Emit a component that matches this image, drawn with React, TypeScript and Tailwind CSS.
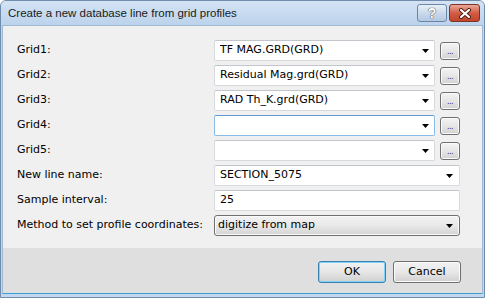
import React from 'react'

const Arrow = () => (
  <svg width="7" height="4" viewBox="0 0 7 4" className="shrink-0">
    <path d="M0 0H7L3.5 4Z" fill="#000" />
  </svg>
)

function Combo({ value, focused }: { value: string; focused?: boolean }) {
  return (
    <div
      className={
        'h-[21px] flex items-center justify-between pl-[5px] pr-[5px] bg-white rounded-[2px] border ' +
        (focused ? 'border-[#8bbce8] border-t-[#5d9ad6]' : 'border-[#d6d9de] border-t-[#c2c6cc]')
      }
    >
      <span className="truncate">{value}</span>
      <Arrow />
    </div>
  )
}

function Browse() {
  return (
    <div className="w-[20px] h-[18px] self-center flex items-end justify-center pb-[3px] rounded-[3px] border border-[#707070] bg-gradient-to-b from-[#f4f4f4] via-[#e6e6e6] to-[#d2d2d2] shadow-[inset_0_0_0_1px_#fbfbfb]">
      <span className="text-[8px] leading-[8px] tracking-[-0.5px] text-[#3a2a6a]">...</span>
    </div>
  )
}

const grids = [
  { label: 'Grid1:', value: 'TF MAG.GRD(GRD)' },
  { label: 'Grid2:', value: 'Residual Mag.grd(GRD)' },
  { label: 'Grid3:', value: 'RAD Th_K.grd(GRD)' },
  { label: 'Grid4:', value: '', focused: true },
  { label: 'Grid5:', value: '' },
]

export default function App() {
  return (
    <div className="w-[485px] h-[298px] flex flex-col bg-[#c2d7ee] border border-[#6f8cad] rounded-t-[6px] overflow-hidden font-['DejaVu_Sans',sans-serif] text-[11px] text-black">
      {/* title bar */}
      <div className="h-[24px] shrink-0 flex items-center justify-between pl-[7px] pr-[4px] bg-gradient-to-b from-[#d3e3f4] to-[#bcd3ec]">
        <span className="font-['Liberation_Sans',sans-serif] text-[11.5px] text-[#1b1b1b] mt-[1px]">
          Create a new database line from grid profiles
        </span>
        <div className="flex items-start gap-[2px] self-start mt-[3px]">
          <div className="w-[30px] h-[18px] flex items-center justify-center rounded-[3px] border border-[#6c86a6] bg-gradient-to-b from-[#e8eff8] via-[#cbdaec] to-[#b3c8e1]">
            <span className="font-['Liberation_Sans',sans-serif] font-bold text-[14px] leading-none text-white [text-shadow:0_0_1px_#333,0_0_1px_#333]">?</span>
          </div>
          <div className="w-[31px] h-[18px] flex items-center justify-center rounded-[3px] border border-[#7b3425] bg-gradient-to-b from-[#e9a898] via-[#d25c45] to-[#c2452c]">
            <svg width="14" height="11" viewBox="0 0 14 11">
              <path d="M3 2L11 9M11 2L3 9" stroke="#4a1c12" strokeWidth="4" strokeLinecap="round" />
              <path d="M3 2L11 9M11 2L3 9" stroke="#fff" strokeWidth="2.2" strokeLinecap="round" />
            </svg>
          </div>
        </div>
      </div>

      {/* client */}
      <div className="flex-1 flex flex-col ml-[1px] mr-[1px] mb-[3px] border border-[#9fb8d3] border-b-[#3aa0d4]">
        <div className="flex-1 bg-[#f0f0f0] pl-[14px] pr-[21px] pt-[14px] flex flex-col gap-[4px]">
          {grids.map((g) => (
            <div key={g.label} className="grid grid-cols-[197px_221px_5px_20px] items-center">
              <span>{g.label}</span>
              <Combo value={g.value} focused={g.focused} />
              <span />
              <Browse />
            </div>
          ))}
          <div className="grid grid-cols-[197px_246px] items-center">
            <span>New line name:</span>
            <div className="h-[21px] flex items-center justify-between pl-[5px] pr-[6px] bg-white rounded-[2px] border border-[#d6d9de] border-t-[#c2c6cc]">
              <span>SECTION_5075</span>
              <Arrow />
            </div>
          </div>
          <div className="grid grid-cols-[197px_246px] items-center">
            <span>Sample interval:</span>
            <div className="h-[21px] flex items-center pl-[5px] bg-white rounded-[2px] border border-[#d6d9de] border-t-[#c2c6cc]">
              <span>25</span>
            </div>
          </div>
          <div className="grid grid-cols-[197px_246px] items-center">
            <span className="whitespace-nowrap">Method to set profile coordinates:</span>
            <div className="h-[21px] flex items-center justify-between pl-[3px] pr-[6px] rounded-[3px] border border-[#707070] bg-gradient-to-b from-[#f3f3f3] via-[#e8e8e8] to-[#d4d4d4] shadow-[inset_0_0_0_1px_#fafafa]">
              <span>digitize from map</span>
              <Arrow />
            </div>
          </div>
        </div>

        {/* footer */}
        <div className="h-[45px] shrink-0 bg-[#dfdfdf] flex justify-end items-start pt-[13px] pr-[21px] gap-[7px]">
          <div className="w-[68px] h-[22px] flex items-center justify-center rounded-[3px] border border-[#3c7fb1] bg-gradient-to-b from-[#f2f2f2] via-[#e6e6e6] to-[#d0d0d0] shadow-[inset_0_0_0_1px_#7fd3f7]">
            OK
          </div>
          <div className="w-[68px] h-[22px] flex items-center justify-center rounded-[3px] border border-[#707070] bg-gradient-to-b from-[#f2f2f2] via-[#e8e8e8] to-[#d0d0d0] shadow-[inset_0_0_0_1px_#fbfbfb]">
            Cancel
          </div>
        </div>
      </div>
    </div>
  )
}
